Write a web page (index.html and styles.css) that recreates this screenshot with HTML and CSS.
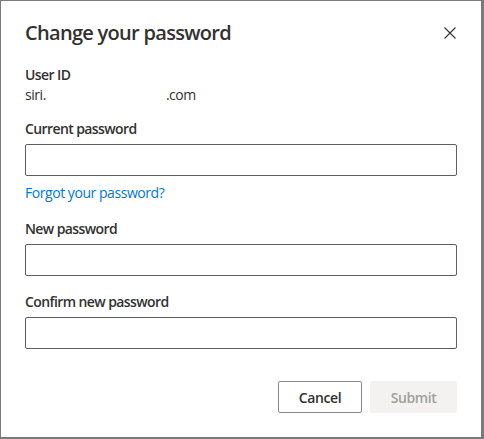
FILE: index.html
```html
<!DOCTYPE html>
<html lang="en">
<head>
<meta charset="utf-8">
<title>Change your password</title>
<link rel="stylesheet" href="styles.css">
</head>
<body>
<div class="dialog" role="dialog" aria-labelledby="dlg-title">
  <div class="header">
    <h1 class="title" id="dlg-title">Change your password</h1>
    <button class="close" type="button" aria-label="Close">
      <svg width="12" height="12" viewBox="0 0 12 12" aria-hidden="true"><path d="M0.5 0.5 L11.5 11.5 M11.5 0.5 L0.5 11.5" stroke="#323130" stroke-width="1.1" fill="none"/></svg>
    </button>
  </div>
  <div class="content">
    <div class="info">
      <div class="label">User ID</div>
      <div class="value">siri.<span class="redacted"></span>.com</div>
    </div>
    <div class="field">
      <label class="label label-pad" for="cur">Current password</label>
      <input class="input" id="cur" type="password">
      <a class="link" href="#">Forgot your password?</a>
    </div>
    <div class="field">
      <label class="label label-pad" for="new">New password</label>
      <input class="input" id="new" type="password">
    </div>
    <div class="field">
      <label class="label label-pad" for="conf">Confirm new password</label>
      <input class="input" id="conf" type="password">
    </div>
  </div>
  <div class="footer">
    <button class="btn btn-default" type="button">Cancel</button>
    <button class="btn btn-disabled" type="button" disabled>Submit</button>
  </div>
</div>
</body>
</html>
```

FILE: styles.css
```css
* { box-sizing: border-box; }
html, body { height: 100%; }
body {
  margin: 0;
  padding: 1px 3px 2px 1px;
  background: #7a7a7a;
  font-family: "Open Sans", "Noto Sans", "Liberation Sans", sans-serif;
  color: #323130;
}
.dialog {
  background: #ffffff;
  height: 100%;
  display: flex;
  flex-direction: column;
}
.header {
  display: flex;
  align-items: flex-start;
  justify-content: space-between;
  padding: 16px 15px 0 24px;
}
.title {
  margin: 2px 0 0 0;
  font-size: 20px;
  line-height: 28px;
  font-weight: 600;
  letter-spacing: -0.7px;
  color: #323130;
}
.close {
  width: 32px;
  height: 32px;
  display: flex;
  align-items: center;
  justify-content: center;
  background: transparent;
  border: 0;
  padding: 0;
}
.content {
  padding: 16px 24px 0 24px;
  display: flex;
  flex-direction: column;
}
.label {
  display: block;
  font-size: 14px;
  line-height: 20px;
  font-weight: 600;
  letter-spacing: -0.6px;
  color: #323130;
}
.label-pad { padding-bottom: 5px; }
.value {
  font-size: 14px;
  line-height: 20px;
  letter-spacing: -0.45px;
  color: #323130;
}
.redacted {
  display: inline-block;
  width: 120px;
}
.field {
  margin-top: 14px;
  display: flex;
  flex-direction: column;
}
.field + .field { margin-top: 16px; }
.input {
  display: block;
  width: 100%;
  height: 32px;
  border: 1px solid #605e5c;
  border-radius: 2px;
  background: #fff;
  margin: 0;
  padding: 0 8px;
  font: inherit;
}
.link {
  margin-top: 7px;
  font-size: 14px;
  line-height: 20px;
  letter-spacing: -0.45px;
  color: #0078d4;
  text-decoration: none;
  align-self: flex-start;
}
.footer {
  margin-top: auto;
  padding: 0 24px 24px 24px;
  display: flex;
  justify-content: flex-end;
  gap: 8px;
}
.btn {
  height: 32px;
  border-radius: 2px;
  font-family: inherit;
  font-size: 14px;
  font-weight: 600;
  letter-spacing: -0.4px;
  padding: 0 16px;
}
.btn-default {
  width: 84px;
  background: #fff;
  border: 1px solid #8a8886;
  color: #323130;
}
.btn-disabled {
  width: 87px;
  background: #f3f2f1;
  border: 1px solid #f3f2f1;
  color: #a19f9d;
}
```
